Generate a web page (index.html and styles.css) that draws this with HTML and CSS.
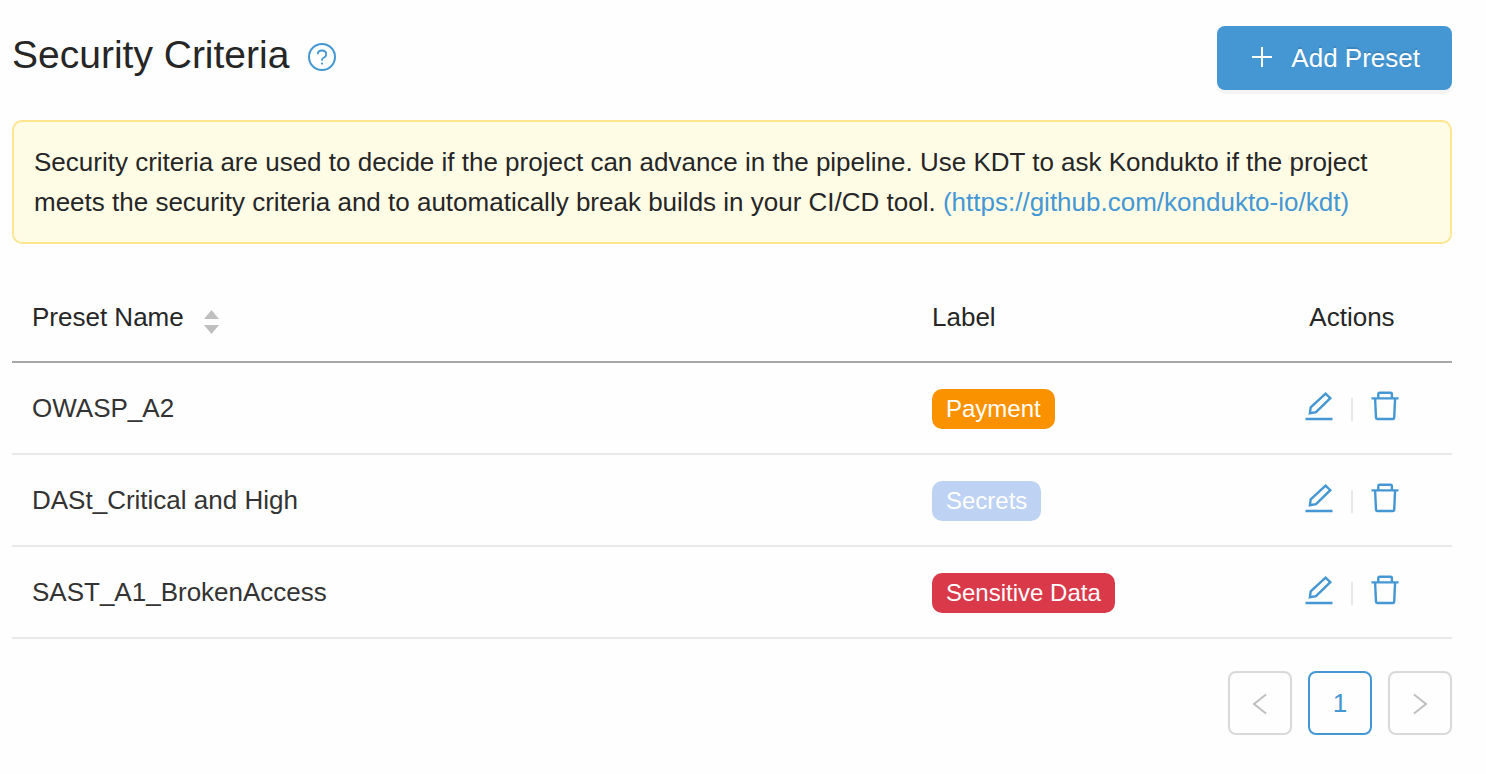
FILE: index.html
```
<!DOCTYPE html>
<html lang="en">
<head>
    <meta charset="UTF-8">
    <meta name="viewport" content="width=device-width, initial-scale=1.0">
    <title>Security Criteria</title>
    <link rel="stylesheet" href="styles.css">
</head>
<body>

<!-- Shared icons -->
<svg class="sprite" aria-hidden="true">
    <symbol id="icon-edit" viewBox="0 0 30 30">
        <path d="M1.500 28h27M21.600 2.600l4.700 4.600L12 21.200l-6.100 1.100.8-6z"/>
    </symbol>
    <symbol id="icon-trash" viewBox="0 0 30 30">
        <path d="M1.500 7.400h27M8.300 7V3.200a1.400 1.400 0 0 1 1.400-1.400h10.800a1.400 1.400 0 0 1 1.400 1.400V7M5.100 7.400l.9 19.200A1.400 1.400 0 0 0 7.400 28h15.400a1.400 1.400 0 0 0 1.400-1.400l.9-19.200"/>
    </symbol>
</svg>

<main class="page">
    <header class="page-header">
        <h1>Security Criteria</h1>
        <button class="help" type="button" aria-label="Help">
            <svg viewBox="0 0 28 28" width="28" height="28">
                <circle cx="14" cy="14" r="13"/>
                <path class="mark" d="M9.800 11.200C9.800 9 11.600 7.500 14 7.500s4.200 1.500 4.200 3.700c0 1.700-1 2.800-2.500 3.500-1.100.5-1.700 1.100-1.700 2.200v.8"/>
                <circle class="dot" cx="14" cy="20.600" r="1.100"/>
            </svg>
        </button>
        <button class="add-button" type="button">
            <svg viewBox="0 0 26 26" width="26" height="26"><path d="M13 2v20M3 12h20"/></svg>
            <span>Add Preset</span>
        </button>
    </header>

    <p class="notice">Security criteria are used to decide if the project can advance in the pipeline. Use KDT to ask Kondukto if the project meets the security criteria and to automatically break builds in your CI/CD tool. <a href="https://github.com/kondukto-io/kdt">(https://github.com/kondukto-io/kdt)</a></p>

    <table class="presets">
        <thead>
            <tr>
                <th class="col-name">
                    <button class="sort" type="button">Preset Name
                        <svg viewBox="0 0 16 24" width="16" height="24"><path d="M7.500 0L15 9H0zM7.500 24L15 15H0z"/></svg>
                    </button>
                </th>
                <th class="col-label">Label</th>
                <th class="col-actions">Actions</th>
            </tr>
        </thead>
        <tbody>
            <tr>
                <td>OWASP_A2</td>
                <td><span class="tag orange">Payment</span></td>
                <td>
                    <div class="actions">
                        <button type="button" aria-label="Edit"><svg><use href="#icon-edit"/></svg></button>
                        <span class="divider"></span>
                        <button type="button" aria-label="Delete"><svg><use href="#icon-trash"/></svg></button>
                    </div>
                </td>
            </tr>
            <tr>
                <td>DASt_Critical and High</td>
                <td><span class="tag blue">Secrets</span></td>
                <td>
                    <div class="actions">
                        <button type="button" aria-label="Edit"><svg><use href="#icon-edit"/></svg></button>
                        <span class="divider"></span>
                        <button type="button" aria-label="Delete"><svg><use href="#icon-trash"/></svg></button>
                    </div>
                </td>
            </tr>
            <tr>
                <td>SAST_A1_BrokenAccess</td>
                <td><span class="tag red">Sensitive Data</span></td>
                <td>
                    <div class="actions">
                        <button type="button" aria-label="Edit"><svg><use href="#icon-edit"/></svg></button>
                        <span class="divider"></span>
                        <button type="button" aria-label="Delete"><svg><use href="#icon-trash"/></svg></button>
                    </div>
                </td>
            </tr>
        </tbody>
    </table>

    <nav class="pagination" aria-label="Pagination">
        <button type="button" aria-label="Previous page" disabled>
            <svg viewBox="0 0 24 24" width="24" height="24"><path d="M18 3.500L6 13l12 9.500"/></svg>
        </button>
        <button type="button" class="current" aria-current="page">1</button>
        <button type="button" aria-label="Next page" disabled>
            <svg viewBox="0 0 24 24" width="24" height="24"><path d="M6 3.500L18 13 6 22.500"/></svg>
        </button>
    </nav>
</main>

</body>
</html>
```
FILE: styles.css
```
* {
    box-sizing: border-box;
}
body {
    margin: 0;
    font-family: "Liberation Sans", Arial, sans-serif;
    font-size: 26px;
    line-height: 40px;
    color: #262626;
    background-color: #fefefe;
}
button {
    padding: 0;
    border: none;
    background: none;
    font: inherit;
    color: inherit;
    cursor: pointer;
}
svg {
    display: block;
    fill: none;
    stroke: currentColor;
    stroke-width: 2;
}
.sprite {
    position: absolute;
    width: 0;
    height: 0;
}
.page {
    padding: 26px 34px 32px 12px;
}

/* Header */
.page-header {
    display: flex;
    align-items: center;
    margin-bottom: 30px;
}
h1 {
    margin: 0 19px 6px 0;
    font-size: 39px;
    font-weight: normal;
    line-height: 48px;
}
.help {
    margin-bottom: 2px;
    color: #4597d4;
}
.help .mark {
    stroke-width: 1.8;
}
.help .dot {
    fill: currentColor;
    stroke: none;
}
.add-button {
    display: flex;
    align-items: center;
    gap: 16px;
    height: 64px;
    margin-left: auto;
    padding: 0 32px;
    border-radius: 8px;
    background-color: #4597d4;
    color: #ffffff;
    text-shadow: 0 -2px 0 rgba(0, 0, 0, 0.12);
    box-shadow: 0 4px 0 rgba(0, 0, 0, 0.04);
}
.add-button:hover {
    background-color: #65aee0;
}

/* Notice */
.notice {
    margin: 0 0 29px;
    padding: 20px;
    border: 2px solid #fde68f;
    border-radius: 10px;
    background-color: #fffce6;
}
.notice a {
    color: #4597d4;
    text-decoration: none;
}

/* Table */
.presets {
    width: 100%;
    border-collapse: separate;
    border-spacing: 0;
    table-layout: fixed;
}
th {
    padding: 24px 20px;
    border-bottom: 2px solid #a8a8a8;
    font-weight: normal;
    text-align: left;
}
td {
    height: 92px;
    padding: 0 20px;
    border-bottom: 2px solid #e8e8e8;
    color: #333333;
}
.col-name {
    width: 62.5%;
}
.col-actions {
    width: 200px;
    text-align: center;
}
.sort {
    display: flex;
    align-items: center;
    gap: 20px;
}
.sort svg {
    margin-top: 10px;
    fill: #bfbfbf;
    stroke: none;
}
.tag {
    display: block;
    width: fit-content;
    margin-top: 2px;
    padding: 0 14px;
    border-radius: 10px;
    font-size: 24px;
    color: #ffffff;
}
.orange {
    background-color: #fa9200;
}
.blue {
    background-color: #bed3f3;
}
.red {
    background-color: #d93949;
}
.actions {
    display: flex;
    justify-content: center;
    align-items: flex-end;
    gap: 17px;
    margin-bottom: 4px;
    color: #4597d4;
}
.actions svg {
    width: 30px;
    height: 30px;
    stroke-width: 2.4;
}
.divider {
    width: 2px;
    height: 23px;
    background-color: #e8e8e8;
}

/* Pagination */
.pagination {
    display: flex;
    justify-content: flex-end;
    gap: 16px;
    margin-top: 32px;
}
.pagination button {
    display: flex;
    align-items: center;
    justify-content: center;
    width: 64px;
    height: 64px;
    border: 2px solid #d9d9d9;
    border-radius: 8px;
    color: #bfbfbf;
}
.pagination .current {
    border-color: #4597d4;
    color: #4597d4;
}
```
